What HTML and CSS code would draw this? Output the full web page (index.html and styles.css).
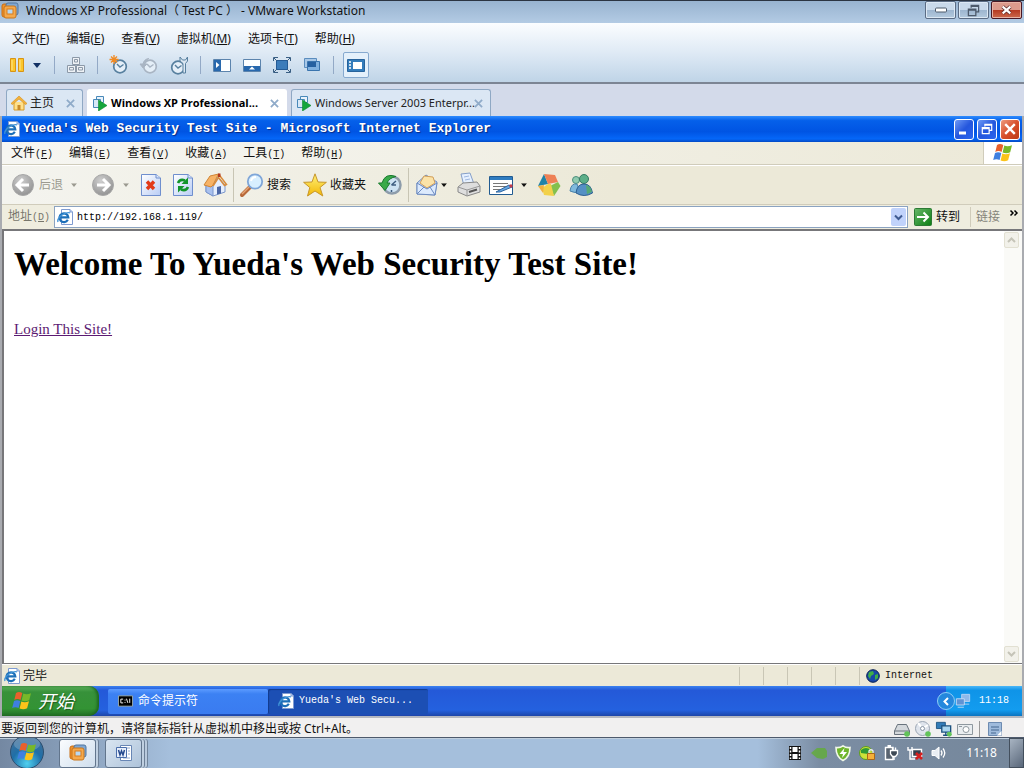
FILE: index.html
```html
<!DOCTYPE html>
<html lang="zh-CN">
<head>
<meta charset="utf-8">
<title>Windows XP Professional - VMware Workstation</title>
<link rel="stylesheet" href="styles.css">
</head>
<body>
<svg class="defs" width="0" height="0" aria-hidden="true">
  <defs>
    <linearGradient id="page-g" x1="0" y1="0" x2="1" y2="1"><stop offset="0" stop-color="#fff"/><stop offset="1" stop-color="#b9cdf5"/></linearGradient>
    <radialGradient id="gray-g" cx=".4" cy=".3" r=".8"><stop offset="0" stop-color="#cfcfcf"/><stop offset="1" stop-color="#8c8c8c"/></radialGradient>
    <linearGradient id="gold-g" x1="0" y1="0" x2="0" y2="1"><stop offset="0" stop-color="#fff27a"/><stop offset="1" stop-color="#f2b705"/></linearGradient>
    <radialGradient id="orb-g" cx=".5" cy=".85" r=".9"><stop offset="0" stop-color="#4fd0ef"/><stop offset=".5" stop-color="#1f6fa8"/><stop offset="1" stop-color="#4a6f94"/></radialGradient>
    <linearGradient id="green-g" x1="0" y1="0" x2="1" y2="1"><stop offset="0" stop-color="#69b86a"/><stop offset="1" stop-color="#0b7d12"/></linearGradient>
    <symbol id="flag" viewBox="0 0 22 20">
      <path d="M5 2C7 .6 9 .7 11.300 2L9.600 9C7.500 7.800 5.500 7.800 3.300 9Z" fill="#e8602c"/>
      <path d="M12.300 2.500C14.500 3.600 17 3.600 20 2.200L18.200 9.300C15.500 10.600 13 10.500 10.600 9.500Z" fill="#78b829"/>
      <path d="M3 10C5 8.900 7.300 9 9.300 10L7.600 17C5.500 15.900 3.400 15.900 1.200 17Z" fill="#3f7fe0"/>
      <path d="M10.300 10.500C12.500 11.600 15 11.600 18 10.300L16.100 17.300C13.500 18.600 11 18.500 8.600 17.500Z" fill="#fbc31a"/>
    </symbol>
    <symbol id="ie" viewBox="0 0 16 16">
      <path d="M4.500.5H13L15.500 3V15.500H4.500Z" fill="#fff" stroke="#7f9bd0"/>
      <path d="M13 .5V3H15.500" fill="#c8d8f5" stroke="#7f9bd0"/>
      <path d="M10.800 10.800A4.400 4.400 0 1 1 11.300 8.400H3.500" fill="none" stroke="#1d6fb8" stroke-width="2.200"/>
      <path d="M1 13C-.4 9.200 7 2.600 13 3.800" fill="none" stroke="#3f92d6" stroke-width="1.300"/>
    </symbol>
    <symbol id="vm-logo" viewBox="0 0 18 18">
      <rect x="1" y="2" width="13" height="13" rx="2" fill="#f0912a" stroke="#c96f13"/>
      <rect x="5" y="1" width="12" height="12" rx="2" fill="#7fa7d2" stroke="#52779f"/>
      <rect x="3" y="4" width="12" height="12" rx="2" fill="#f5a94c" stroke="#c8761c"/>
      <rect x="6" y="7" width="6" height="5" fill="#b9d8f0" stroke="#d97c1b"/>
    </symbol>
    <symbol id="vm-run" viewBox="0 0 16 16">
      <path d="M4.500 1.500H11.500V7.500H4.500Z" fill="#e9f2fb" stroke="#4889b9"/>
      <path d="M1.500 4.500H8.500V12.500H1.500Z" fill="#d8e8f6" stroke="#4889b9"/>
      <path d="M6.500 5 15 10.500 6.500 16Z" fill="#15a63c" stroke="#0d8a2e" stroke-width=".6"/>
    </symbol>
    <symbol id="clock" viewBox="0 0 20 20">
      <circle cx="11" cy="11.500" r="6.300" fill="#e5eff8" stroke="currentColor" stroke-width="1.700"/>
      <path d="M8 9 11 12 14.500 9.500" fill="none" stroke="currentColor" stroke-width="1.400"/>
    </symbol>
    <symbol id="x" viewBox="0 0 10 10"><path d="M1 1 9 9M9 1 1 9" stroke="currentColor" stroke-width="2"/></symbol>
    <symbol id="restore" viewBox="0 0 14 14"><path d="M4.500 4V1.500H12.500V8.500H10M4.500 2.500H12.500M1.500 5.500H9.500V12.500H1.500ZM1.500 6.500H9.500" fill="none" stroke="currentColor" stroke-width="1.400"/></symbol>
    <symbol id="down" viewBox="0 0 8 5"><path d="M0 0H8L4 5Z" fill="currentColor"/></symbol>
    <symbol id="monitors" viewBox="0 0 18 18">
      <path d="M7.500 1.500H16.500V8.500H7.500ZM12 8.500V11M9 11.500H15" fill="#5ca6dd" stroke="#244e7b"/>
      <path d="M2.500 6.500H11.500V13.500H2.500ZM7 13.500V16M4 16.500H10" fill="#9bd0f0" stroke="#244e7b"/>
    </symbol>
  </defs>
</svg>

<header class="host-title">
  <svg class="i18"><use href="#vm-logo"/></svg>
  <span class="grow">Windows XP Professional（ Test PC ） - VMware Workstation</span>
  <div class="host-controls">
    <button class="hc" aria-label="最小化"><svg width="14" height="6"><rect x="1.500" y="1" width="11" height="4" rx="1" fill="#fff" stroke="#4d5a6b"/></svg></button>
    <button class="hc" aria-label="还原"><svg width="13" height="13" class="dark"><use href="#restore"/></svg></button>
    <button class="hc hc-close" aria-label="关闭"><svg width="11" height="10" viewBox="0 0 13 11"><path d="M2 1.500 11 9.500M11 1.500 2 9.500" stroke="#5b2a2a" stroke-width="4.400"/><path d="M2 1.500 11 9.500M11 1.500 2 9.500" stroke="#fff" stroke-width="2.600"/></svg></button>
  </div>
</header>

<div class="host-chrome">
  <nav class="host-menu">
    <button>文件(<u>F</u>)</button><button>编辑(<u>E</u>)</button><button>查看(<u>V</u>)</button><button>虚拟机(<u>M</u>)</button><button>选项卡(<u>T</u>)</button><button>帮助(<u>H</u>)</button>
  </nav>
  <div class="host-tools">
    <div class="tg none">
      <button class="ht" aria-label="挂起"><svg class="i18" viewBox="0 0 18 18"><path d="M2.500 2.500H7.500V15.500H2.500ZM10.500 2.500H15.500V15.500H10.500Z" fill="#fbc62b" stroke="#d99413"/><path d="M4 4V14M12 4V14" stroke="#ffe690"/></svg></button>
      <button class="ht-arrow" aria-label="电源选项"><svg width="8" height="5"><use href="#down"/></svg></button>
    </div>
    <div class="tg">
      <button class="ht" aria-label="发送组合键"><svg class="i20" viewBox="0 0 20 20"><g fill="#eef2f6" stroke="#8c99a8"><path d="M6.500 2.500H13.500V9.500H6.500ZM1.500 10.500H9.500V17.500H1.500ZM10.500 10.500H18.500V17.500H10.500Z"/><path d="M8.500 4.500H11.500V7H8.500ZM3.500 12.500H7.500V15H3.500ZM12.500 12.500H16.500V15H12.500Z"/></g></svg></button>
    </div>
    <div class="tg">
      <button class="ht" aria-label="拍摄快照"><svg class="i20 steel"><use href="#clock"/><path d="M5 0V9M.5 4.500H9.500M2 1.500 8 7.500M8 1.500 2 7.500" stroke="#f08a24" stroke-width="1.300"/></svg></button>
      <button class="ht" aria-label="恢复快照"><svg class="i20 pale"><use href="#clock"/><path d="M1 9 4 13 8 9ZM4 9Q5 4 10 3.500" fill="#a9b5c3" stroke="#a9b5c3"/></svg></button>
      <button class="ht" aria-label="管理快照"><svg class="i20 steel"><use href="#clock" x="-2" y="1" width="20" height="20"/><path d="M11 2V6L14 8.500V18H16.500V8.500L18.500 6V2L16.500 5H13.500Z" fill="#dce8f3" stroke="#58809f"/></svg></button>
    </div>
    <div class="tg">
      <button class="ht" aria-label="显示库"><svg class="i20" viewBox="0 0 20 20"><path d="M1.500 4.500H18.500V16.500H1.500Z" fill="#fff" stroke="#5c84ad"/><path d="M2 5H9V16H2Z" fill="#2868ad"/><path d="M4 7V13L7.500 10Z" fill="#fff"/></svg></button>
      <button class="ht" aria-label="缩略图栏"><svg class="i20" viewBox="0 0 20 20"><path d="M1.500 4.500H18.500V16.500H1.500Z" fill="#fff" stroke="#5c84ad"/><path d="M2 11H18V16H2Z" fill="#2868ad"/><path d="M7 14.500H13L10 11.500Z" fill="#fff"/></svg></button>
      <button class="ht" aria-label="全屏"><svg class="i20" viewBox="0 0 20 20"><path d="M4.500 5.500H15.500V14.500H4.500Z" fill="#3c7cba" stroke="#245b96"/><path d="M1.500 6V2.500H6M14 2.500H18.500V6M18.500 14V17.500H14M6 17.500H1.500V14M2 3 5 6M18 3 15 6M2 17 5 14M18 17 15 14" fill="none" stroke="#395e83"/></svg></button>
      <button class="ht" aria-label="Unity"><svg class="i20" viewBox="0 0 20 20"><path d="M2.500 3.500H14.500V12.500H2.500Z" fill="#a8c8e8" stroke="#5b8dbe"/><path d="M5.500 6.500H17.500V15.500H5.500Z" fill="#7fb0df" stroke="#3a74ae"/><path d="M6 7H14V12H6Z" fill="#2560a1"/></svg></button>
    </div>
    <div class="tg">
      <button class="ht ht-on" aria-label="控制台视图" aria-pressed="true"><svg class="i20" viewBox="0 0 20 20"><path d="M1.500 4.500H18.500V16.500H1.500Z" fill="#337cbb" stroke="#27639c"/><path d="M7 7H16V14H7Z" fill="#fff"/><path d="M3 7H5M3 10H5M3 13H5" stroke="#fff" stroke-width="1.500"/></svg></button>
    </div>
  </div>
</div>

<div class="tabs" role="tablist">
  <div class="tab tab-home"><svg width="16" height="16" viewBox="0 0 16 16"><path d="M3 7V15H13V7" fill="#ffe08a" stroke="#d79a27"/><path d="M0 8.500 8 1 16 8.500 14.500 9.500 8 4 1.500 9.500Z" fill="#f4b23c" stroke="#d18e1c" stroke-width=".6"/><path d="M6.500 10H9.500V15H6.500Z" fill="#c98a2a"/></svg><button role="tab" class="tab-label">主页</button><button class="tab-x" aria-label="关闭"><svg width="9" height="9"><use href="#x"/></svg></button></div>
  <div class="tab tab-vm tab-on"><svg width="16" height="16"><use href="#vm-run"/></svg><button role="tab" aria-selected="true" class="tab-label">Windows XP Professional...</button><button class="tab-x" aria-label="关闭"><svg width="9" height="9"><use href="#x"/></svg></button></div>
  <div class="tab tab-vm"><svg width="16" height="16"><use href="#vm-run"/></svg><button role="tab" class="tab-label">Windows Server 2003 Enterpr...</button><button class="tab-x" aria-label="关闭"><svg width="9" height="9"><use href="#x"/></svg></button></div>
</div>

<main class="guest">
  <div class="xp-title">
    <svg class="i16"><use href="#ie"/></svg>
    <span class="grow">Yueda's Web Security Test Site - Microsoft Internet Explorer</span>
    <button class="xc" aria-label="最小化"><svg width="14" height="14"><path d="M2 11H9" stroke="#fff" stroke-width="3"/></svg></button>
    <button class="xc" aria-label="还原"><svg width="12" height="12"><use href="#restore"/></svg></button>
    <button class="xc xc-close" aria-label="关闭"><svg width="12" height="12"><use href="#x"/></svg></button>
  </div>

  <div class="ie-menu-row">
    <nav class="ie-menu">
      <button>文件<span>(<u>F</u>)</span></button><button>编辑<span>(<u>E</u>)</span></button><button>查看<span>(<u>V</u>)</span></button><button>收藏<span>(<u>A</u>)</span></button><button>工具<span>(<u>T</u>)</span></button><button>帮助<span>(<u>H</u>)</span></button>
    </nav>
    <div class="throbber"><svg width="22" height="20"><use href="#flag"/></svg></div>
  </div>

  <div class="ie-tools">
    <div class="ie-back">
      <button class="it it-label" disabled><svg class="i24" viewBox="0 0 24 24"><circle cx="12" cy="12" r="10.500" fill="url(#gray-g)" stroke="#a8a8a8"/><path d="M12 6 6 12 12 18M7 12H18" fill="none" stroke="#fff" stroke-width="3"/></svg><span>后退</span></button>
      <button class="arrow" disabled aria-label="后退列表"><svg width="6" height="4" viewBox="0 0 8 5"><use href="#down"/></svg></button>
    </div>
    <button class="it" disabled aria-label="前进"><svg class="i24" viewBox="0 0 24 24"><circle cx="12" cy="12" r="10.500" fill="url(#gray-g)" stroke="#a8a8a8"/><path d="M12 6 18 12 12 18M17 12H6" fill="none" stroke="#fff" stroke-width="3"/></svg></button>
    <button class="arrow" disabled aria-label="前进列表"><svg width="6" height="4" viewBox="0 0 8 5"><use href="#down"/></svg></button>
    <button class="it" aria-label="停止"><svg class="i24" viewBox="0 0 24 24"><path d="M2.500 1.500H17L21.500 5V22.500H2.500Z" fill="url(#page-g)" stroke="#6f8fce"/><path d="M17 1.500V5H21.500" fill="#dce7fb" stroke="#6f8fce"/><path d="M8 8.500 15 16M15 8.500 8 16" stroke="#e23a18" stroke-width="3.400"/></svg></button>
    <button class="it" aria-label="刷新"><svg class="i24" viewBox="0 0 24 24"><path d="M2.500 1.500H17L21.500 5V22.500H2.500Z" fill="url(#page-g)" stroke="#6f8fce"/><path d="M17 1.500V5H21.500" fill="#dce7fb" stroke="#6f8fce"/><path d="M7 10Q9 5.500 14 7.500" fill="none" stroke="#12952a" stroke-width="2.600"/><path d="M17 4.500V11H10.500Z" fill="#12952a"/><path d="M17 14Q15 18.500 10 16.500" fill="none" stroke="#12952a" stroke-width="2.600"/><path d="M7 19.500V13H13.500Z" fill="#12952a"/></svg></button>
    <button class="it" aria-label="主页"><svg class="i24" viewBox="0 0 24 24"><path d="M3 12 9 13 15 4 22 12V19L10 23 3 19Z" fill="#e6effd" stroke="#7b96cc"/><path d="M3 12V19L10 23V12Z" fill="#a9c1ee" stroke="#7b96cc"/><path d="M1 12 7 3 15.500 1 10 12 8 14Z" fill="#f7b365" stroke="#d08435"/><path d="M15.500 1 23.500 11.500 21.500 12.500 15.500 4.500 10 13" fill="none" stroke="#d98c3b" stroke-width="1.500"/><path d="M15 .5H17.500V4H15Z" fill="#b33a1e"/><path d="M14 14 18 13V20.500L14 21.500Z" fill="#4c67a5"/></svg></button>
    <span class="vsep"></span>
    <button class="it it-label it-wide"><svg class="i24" viewBox="0 0 24 24"><path d="M2 22 10 14" stroke="#b8693a" stroke-width="4" stroke-linecap="round"/><path d="M2 21 9 14" stroke="#e5a677" stroke-width="1.500"/><circle cx="15" cy="8.500" r="7.200" fill="#d8efff" stroke="#7fa6d8" stroke-width="1.800"/><path d="M11 8Q12 4 16 4" fill="none" stroke="#fff" stroke-width="2"/></svg><span>搜索</span></button>
    <button class="it it-label it-wide"><svg class="i24" viewBox="0 0 24 24"><path d="M12 .8 15 9 23.400 9.300 17 14.500 19.800 23 12 18 4.500 23 6.800 14.500.6 9.300 9 9Z" fill="url(#gold-g)" stroke="#c7962a"/></svg><span>收藏夹</span></button>
    <button class="it" aria-label="历史"><svg class="i24" viewBox="0 0 24 24"><circle cx="14" cy="12" r="8.500" fill="#cde2f3" stroke="#8d9cab" stroke-width="2.500"/><path d="M13.500 12 18 8M13.500 12H18M13.500 17V19" stroke="#3c5c80" stroke-width="1.500"/><path d="M18 3.500Q7-.5 4 10H.5L7 17.500 12 10H9Q11 5 18 3.500Z" fill="#39aa49" stroke="#1b7c30"/></svg></button>
    <span class="vsep"></span>
    <div class="mail">
      <button class="it" aria-label="邮件"><svg class="i24" viewBox="0 0 24 24"><path d="M2 10 11 2 22 9 20 22 2 21Z" fill="#c4d9f8" stroke="#6d8bc0"/><path d="M5 10 9 3 18 4 20 10 12 15Z" fill="#fbe3a8" stroke="#d2a05a"/><path d="M2 10 12 16 22 10 20 22 2 21Z" fill="#dceafd" stroke="#6d8bc0"/><path d="M2 21 9 14M20 22 15 14" stroke="#6d8bc0"/></svg></button>
      <button class="arrow" aria-label="邮件列表"><svg width="6" height="4" viewBox="0 0 8 5"><use href="#down"/></svg></button>
    </div>
    <button class="it" aria-label="打印"><svg class="i24" viewBox="0 0 24 24"><path d="M4 1 13 0 17 11 7 13Z" fill="#e5f0ff" stroke="#859fc8"/><path d="M7 4 12 3M8 7 13 6" stroke="#9fb7df"/><path d="M1 14 6 10 20 9 23 13V19L10 23 1 19Z" fill="#dedede" stroke="#888"/><path d="M1 14 10 17 23 13M10 17V23" fill="none" stroke="#999"/><path d="M12 19 20 16.500" stroke="#555" stroke-width="2"/></svg></button>
    <div class="edit">
      <button class="it" aria-label="编辑"><svg class="i24" viewBox="0 0 24 24"><path d="M.5 3.500H23.500V21.500H.5Z" fill="#fff" stroke="#215b91"/><path d="M1 4H23V7H1Z" fill="#2f7cc0"/><path d="M4 10.500H19M4 13.500H18M4 16.500H12" stroke="#777"/><path d="M7 19 20 12 23 14 11 19Z" fill="#68a7e4" stroke="#2c659f"/><circle cx="22" cy="13" r="1.700" fill="#c33c4d"/></svg></button>
      <button class="arrow" aria-label="编辑列表"><svg width="6" height="4" viewBox="0 0 8 5"><use href="#down"/></svg></button>
    </div>
    <button class="it" aria-label="网络工具"><svg class="i24" viewBox="0 0 24 24"><path d="M7 1 11 11 1 13Z" fill="#1e83a8"/><path d="M7 1 18 2 21 9 11 11Z" fill="#ee8156"/><path d="M21 9 23.500 13 17 23 13 13Z" fill="#83c04e"/><path d="M11 11H14L17 23 7 22 5 15Z" fill="#f2d14a"/><path d="M1 13 7 12 6 20Z" fill="#f0b040"/></svg></button>
    <button class="it" aria-label="Messenger"><svg class="i24" viewBox="0 0 24 24"><circle cx="7" cy="7" r="3.500" fill="#8fcbb0" stroke="#4e8f7c"/><path d="M1 18Q2 10 8 11L11 18Q6 21 1 18Z" fill="#7fb9dd" stroke="#4b82aa"/><circle cx="15" cy="6" r="4.500" fill="#5caf88" stroke="#357963"/><path d="M7 20Q8 11 15 11 22 11 23.500 20 15 25 7 20Z" fill="#5590c4" stroke="#2d5f91"/><path d="M17 12Q22 13 23 19L18 21Z" fill="#55a875"/></svg></button>
  </div>

  <form class="address">
    <label for="url">地址<span class="mono">(<u>D</u>)</span></label>
    <div class="url-box">
      <svg class="i16"><use href="#ie"/></svg>
      <input id="url" type="text" value="http://192.168.1.119/">
      <button type="button" class="url-drop" aria-label="历史地址"><svg width="9" height="7"><path d="M1 1.500 4.500 5 8 1.500" fill="none" stroke="#3f5b91" stroke-width="2"/></svg></button>
    </div>
    <button type="button" class="go"><svg width="18" height="18" viewBox="0 0 18 18"><rect x=".5" y=".5" width="17" height="17" rx="1" fill="url(#green-g)" stroke="#2c7a34"/><path d="M3 9H14M9.500 4.500 14 9 9.500 13.500" fill="none" stroke="#fff" stroke-width="2"/></svg>转到</button>
    <span class="links">链接</span>
    <button type="button" class="more" aria-label="更多"><svg width="8" height="6"><path d="M.5.5 3 3 .5 5.500M4.500.5 7 3 4.500 5.500" fill="none" stroke="#000" stroke-width="1.500"/></svg></button>
  </form>

  <div class="view">
    <article class="page">
      <h1>Welcome To Yueda's Web Security Test Site!</h1>
      <a href="#login">Login This Site!</a>
    </article>
    <div class="scroll">
      <button disabled aria-label="向上滚动"><svg width="9" height="6"><path d="M1 5 4.500 1.500 8 5" fill="none" stroke="#c5c4b8" stroke-width="2"/></svg></button>
      <button disabled aria-label="向下滚动"><svg width="9" height="6"><path d="M1 1 4.500 4.500 8 1" fill="none" stroke="#c5c4b8" stroke-width="2"/></svg></button>
    </div>
  </div>

  <footer class="ie-status">
    <svg class="i16"><use href="#ie"/></svg><span class="grow">完毕</span>
    <i></i><i></i><i></i><i></i><i></i>
    <div class="zone"><svg width="14" height="14" viewBox="0 0 14 14"><circle cx="7" cy="7" r="6.300" fill="#1647a8" stroke="#071f50"/><path d="M3 3 7 2 8 5 5 7 4 10 2 7ZM9 6 12 5V9L9 11Z" fill="#3fae48"/></svg><span class="mono">Internet</span></div>
  </footer>

  <div class="xp-bar">
    <button class="xp-start"><svg width="22" height="20"><use href="#flag"/></svg><span>开始</span></button>
    <button class="xp-task"><svg width="15" height="12" viewBox="0 0 16 12"><path d="M.5.500H15.500V11.500H.5Z" fill="#000" stroke="#9aa"/><path d="M5.500 4H3V8H5.500M7.500 4.500V5.500M7.500 7V8M9 3.500 10.500 8M12.500 3.500V8" fill="none" stroke="#fff"/></svg><span>命令提示符</span></button>
    <button class="xp-task xp-task-on"><svg class="i16"><use href="#ie"/></svg><span class="mono">Yueda's Web Secu...</span></button>
    <div class="xp-tray">
      <button class="chev" aria-label="显示隐藏图标"><svg width="6" height="9"><path d="M5 1 1.500 4.500 5 8" fill="none" stroke="#fff" stroke-width="2"/></svg></button>
      <svg class="i16" viewBox="0 0 18 18"><path d="M7.500 1.500H16.500V9.500H7.500ZM9 12.500H16" fill="#8fb9ea" stroke="#b9d6f5"/><path d="M1.500 6.500H10.500V13.500H1.500ZM3 16H10" fill="#5f93d4" stroke="#c8def6"/></svg>
      <time class="mono">11:18</time>
    </div>
  </div>
</main>

<footer class="vm-status">
  <span class="grow">要返回到您的计算机，请将鼠标指针从虚拟机中移出或按 Ctrl+Alt。</span>
  <div class="devices">
    <svg class="i16" viewBox="0 0 16 16"><path d="M3.500 3.500H12.500L15.500 10V13.500H.5V10Z" fill="#d4d8dc" stroke="#69737d"/><path d="M.5 10H15.500" stroke="#69737d"/><circle cx="13" cy="13" r="2.800" fill="#62c35a"/></svg>
    <svg class="i16" viewBox="0 0 16 16"><circle cx="7.500" cy="7.500" r="7" fill="#dfe4ec" stroke="#9aa5b3"/><path d="M7.500 7.500 3 2M7.500 7.500 13 4" stroke="#fff" stroke-width="2"/><circle cx="7.500" cy="7.500" r="2" fill="#fff" stroke="#8794a3"/><circle cx="13" cy="13" r="2.800" fill="#62c35a"/></svg>
    <svg class="i16" viewBox="0 0 18 18"><path d="M.5 1.500H10.500V8.500H.5Z" fill="#327bb7" stroke="#1c527f"/><path d="M6.500 5.500H16.500V12.500H6.500ZM11 13V16M8 16H14" fill="#a9d5ef" stroke="#1c527f" stroke-width="1.500"/><circle cx="15" cy="15" r="2.800" fill="#62c35a"/></svg>
    <svg class="i16" viewBox="0 0 16 16"><path d="M.5 3.500H15.500V13.500H.5Z" fill="#e9edf0" stroke="#8e989f"/><circle cx="9" cy="8.500" r="3" fill="#fff" stroke="#8e989f"/><path d="M2 5.500H5" stroke="#8e989f"/></svg>
    <span class="dsep"></span>
    <svg class="i16" viewBox="0 0 16 16"><path d="M1.500 1.500H14.500V14.500H1.500Z" fill="#9fbbdc" stroke="#6d8bb1"/><path d="M4 6H12M4 9H12M4 12H9" stroke="#44668f"/><path d="M10 14.500 14.500 10V14.500Z" fill="#fff"/></svg>
  </div>
</footer>

<footer class="host-bar">
  <button class="orb" aria-label="开始"><svg width="36" height="30" viewBox="0 0 36 30"><circle cx="18" cy="14" r="16.500" fill="url(#orb-g)" stroke="#2d4e6e"/><ellipse cx="18" cy="6" rx="13" ry="7" fill="#fff" opacity=".2"/><use href="#flag" x="7" y="4" width="22" height="20"/></svg></button>
  <button class="host-task" aria-label="VMware Workstation"><svg class="i18"><use href="#vm-logo"/></svg></button>
  <button class="host-task host-task-2" aria-label="Word"><svg class="i18" viewBox="0 0 18 18"><path d="M5.500 1.500H16.500V16.500H5.500Z" fill="#fff" stroke="#6886b5"/><path d="M12 4H15M13 7H15M13 10H15M8 14H15" stroke="#90a9d0"/><path d="M1.500 3.500H11.500V13.500H1.500Z" fill="#e9f0fc" stroke="#4a6eab"/><path d="M3.500 6 5 11 6.500 7 8 11 9.500 6" fill="none" stroke="#24498e" stroke-width="1.500"/></svg></button>
  <div class="host-tray">
    <svg class="i16" viewBox="0 0 16 16"><path d="M2 1H14V15H2Z" fill="#111"/><path d="M5.500 2H10.500V7H5.500ZM5.500 9H10.500V14H5.500Z" fill="#fff"/><path d="M3.500 2V14M12.500 2V14" stroke="#fff" stroke-width="1.500" stroke-dasharray="2 1.500"/></svg>
    <svg class="i16" viewBox="0 0 16 16"><path d="M0 8 6 3H14L16 6V12L12 14 6 13Z" fill="#63ac3d" opacity=".85"/></svg>
    <svg class="i16" viewBox="0 0 16 16"><path d="M8 .8Q11 3 15 2.500 15 12 8 15.500 1 12 1 2.500 5 3 8 .8Z" fill="#6fb52c" stroke="#f1f8e8" stroke-width="1.600"/><path d="M9.500 3 4.500 9H8L7 13 12 7H8.500Z" fill="#fff"/></svg>
    <svg class="i16" viewBox="0 0 16 16"><circle cx="7" cy="8" r="6.500" fill="#cde23a" stroke="#5c9e22"/><path d="M2 5Q7 1 12 5L9 9 2 8Z" fill="#2f9a36"/><path d="M8.500 8.500H15.500V14.500H8.500Z" fill="#f6b13a" stroke="#a9681b"/><path d="M10 8V6Q12 3.500 14 6V8" fill="none" stroke="#eee" stroke-width="1.300"/></svg>
    <svg class="i16" viewBox="0 0 16 16"><path d="M2.500 2.500H10V14.500H2.500Z" fill="#5a6470" stroke="#fff" stroke-width="1.400"/><path d="M4.500 1H8" stroke="#fff" stroke-width="2"/><path d="M7.500 5.500H14.500V9L12.500 11.500H9.500L7.500 9Z" fill="#3d4854" stroke="#fff" stroke-width="1.300"/><path d="M9.500 2.500V5M12.500 2.500V5M11 12V15" stroke="#fff" stroke-width="1.400"/></svg>
    <svg class="i16" viewBox="0 0 16 16"><path d="M5.500 4.500H14.500V11.500H5.500Z" fill="#33404d" stroke="#fff" stroke-width="1.400"/><path d="M1 2V5H5V2M3 5V14H8" fill="none" stroke="#fff" stroke-width="1.400"/><path d="M9 8 15 14M15 8 9 14" stroke="#d41f1f" stroke-width="2.600"/></svg>
    <svg class="i16" viewBox="0 0 16 16"><path d="M1 5.500H4L8 2V14L4 10.500H1Z" fill="#e9eef3" stroke="#fff"/><path d="M10 5.500Q12 8 10 10.500M12 3.500Q15.500 8 12 12.500" fill="none" stroke="#fff" stroke-width="1.300"/></svg>
    <time>11:18</time>
  </div>
  <button class="desktop" aria-label="显示桌面"></button>
</footer>
</body>
</html>
```
FILE: styles.css
```css
* { box-sizing: border-box; }

body {
  margin: 0;
  min-height: 100vh;
  display: flex;
  flex-direction: column;
  background: #d3daea;
  color: #111;
  font: 12px/16px "Noto Sans", "Noto Sans CJK SC", sans-serif;
}

button {
  padding: 0;
  border: 0;
  background: none;
  color: inherit;
  font: inherit;
  white-space: nowrap;
}

svg { display: block; flex: none; overflow: visible; }
.defs { position: absolute; }
.i16 { width: 16px; height: 16px; }
.i18 { width: 18px; height: 18px; }
.i20 { width: 20px; height: 20px; }
.i24 { width: 24px; height: 24px; }
.grow { flex: 1; white-space: nowrap; }
.mono { font-family: "Liberation Mono", "Noto Sans CJK SC", monospace; font-size: 10px; }
.steel { color: #58809f; }
.pale { color: #a9b5c3; }
.dark { color: #4d5a6b; }

/* Host window title */
.host-title {
  display: flex;
  align-items: center;
  gap: 7px;
  height: 23px;
  padding: 0 2px 2px 1px;
  border-top: 1px solid #2b3442;
  background: linear-gradient(#98b3d0, #b3cbe4);
}
.host-controls { display: flex; gap: 2px; align-self: flex-start; }
.hc {
  display: grid;
  place-items: center;
  width: 31px;
  height: 18px;
  border: 1px solid #5b6c84;
  border-radius: 2px;
  background: linear-gradient(#c9d9ea 50%, #9db5cf 50%, #b4cade);
  box-shadow: inset 0 0 0 1px #dde8f4;
}
.hc-close {
  border-color: #491824;
  background: linear-gradient(#dc9a8c 50%, #b53820 50%, #cc6a4d);
  box-shadow: inset 0 0 0 1px #e7b3a6;
}

/* Host menu and toolbar */
.host-chrome {
  display: flex;
  flex-direction: column;
  height: 61px;
  border-bottom: 2px solid #7c8594;
  background: linear-gradient(#fbfdff, #dfeaf5 50%, #bfd4e7);
}
.host-menu { display: flex; gap: 17px; padding: 8px 12px 4px; }
.host-tools { display: flex; align-items: center; height: 28px; padding-left: 5px; }
.tg { display: flex; align-items: center; gap: 6px; }
.none { gap: 0; }
.tg + .tg::before { content: ""; width: 1px; height: 18px; margin: 0 3px 0 9px; background: #93a9c6; }
.ht, .ht-arrow { display: grid; place-items: center; width: 24px; height: 26px; }
.ht-arrow { width: 16px; color: #123064; }
.ht-on { width: 26px; border: 1px solid #86a9cf; border-radius: 2px; background: #e4f0fb; }

/* Virtual machine tabs */
.tabs { display: flex; gap: 4px; padding: 5px 6px 0; }
.tab {
  display: flex;
  align-items: center;
  gap: 3px;
  width: 200px;
  height: 27px;
  padding: 0 7px 0 4px;
  border: 1px solid #8fa8c4;
  border-bottom: 0;
  border-radius: 3px 3px 0 0;
  background: #dbe7f4;
  color: #222;
}
.tab-home { width: 77px; }
.tab-label { flex: 1; min-width: 0; text-align: left; font-size: 11px; }
.tab-home .tab-label { font-size: 12px; }
.tab-on { background: #fff; border-color: #fff; }
.tab-on .tab-label { font-family: "Open Sans", "Noto Sans", sans-serif; font-weight: 700; color: #000; }
.tab-x { color: #8fabc9; }

/* Guest display */
.guest {
  flex: 1;
  display: flex;
  flex-direction: column;
  padding: 0 2px;
  background: #a9abb0;
}
.xp-title {
  display: flex;
  align-items: center;
  gap: 3px;
  height: 26px;
  padding: 0 2px;
  background: linear-gradient(#2f8cff, #0560ea 18%, #0054e3 60%, #0567f8 88%, #0349c4);
  color: #fff;
  font: bold 13px/16px "Liberation Mono", monospace;
  text-shadow: 1px 1px 1px #0a2a80;
}
.xc {
  display: grid;
  place-items: center;
  width: 20px;
  height: 21px;
  border: 1px solid #fff;
  border-radius: 3px;
  background: linear-gradient(135deg, #6e9af5, #2456dd 50%, #2b66ee);
}
.xc-close { background: linear-gradient(135deg, #ee9c80, #d8502c 50%, #bd3a14); }

.ie-menu-row {
  display: flex;
  height: 23px;
  border-bottom: 1px solid #d0ccbb;
  background: linear-gradient(90deg, #f6f6f2, #ece9d8);
}
.ie-menu { flex: 1; display: flex; gap: 16px; padding: 1px 0 0 9px; }
.ie-menu span { font-family: "Liberation Mono", monospace; font-size: 10px; }
.throbber { display: grid; place-items: center; width: 39px; background: #fff; border-left: 1px solid #d0ccbb; }

.ie-tools {
  display: flex;
  align-items: center;
  gap: 8px;
  height: 40px;
  padding-left: 9px;
  border-top: 1px solid #fff;
  border-bottom: 1px solid #d0ccbb;
  background: linear-gradient(90deg, #f4f4ef, #ece9d8 60%);
}
.ie-back, .mail, .edit { display: flex; align-items: center; gap: 8px; }
.ie-back { margin-right: 4px; }
.mail { gap: 2px; }
.it:disabled, .arrow:disabled { color: #9b9a90; }
.it-label { display: flex; align-items: center; gap: 4px; }
.it-wide { gap: 3px; margin-right: 4px; }
.arrow { width: 8px; }
.vsep { width: 1px; height: 34px; margin: 0 -2px; background: #c8c5b4; }

.address {
  display: flex;
  align-items: center;
  height: 24px;
  padding-left: 6px;
  background: #efeddf;
}
.address label { width: 46px; color: #77766c; }
.url-box {
  flex: 1;
  display: flex;
  align-items: center;
  gap: 4px;
  height: 22px;
  padding: 1px 1px 1px 2px;
  border: 1px solid #8ba3c1;
  background: #fff;
}
.url-box input {
  flex: 1;
  min-width: 0;
  padding: 2px 0 0;
  border: 0;
  outline: 0;
  background: none;
  color: #000;
  font: 10px/16px "Liberation Mono", monospace;
}
.url-drop { display: grid; place-items: center; width: 15px; height: 18px; border-radius: 2px; background: #c1d3fb; }
.go { display: flex; align-items: center; gap: 4px; padding: 0 10px 0 6px; }
.links { padding: 2px 10px 2px 5px; border-left: 1px solid #d0ccbb; color: #85847a; }
.more { align-self: flex-start; width: 12px; padding-top: 5px; }

/* Web page */
.view {
  flex: 1;
  display: flex;
  border: solid #77777a;
  border-width: 2px 0 1px 2px;
  background: #fff;
}
.page { flex: 1; padding: 15px 10px; font: 15px/20px "Liberation Serif", serif; color: #000; }
.page h1 { margin: 0 0 36px; font-size: 33px; line-height: 37px; }
.page a { color: #5c1a72; }
.scroll {
  display: flex;
  flex-direction: column;
  justify-content: space-between;
  width: 18px;
  padding: 1px 0;
  background: #fafaf7;
}
.scroll button {
  display: grid;
  place-items: center;
  width: 15px;
  height: 16px;
  border: 1px solid #e2e0d2;
  border-radius: 2px;
  background: #f2f1ea;
}

.ie-status {
  display: flex;
  align-items: center;
  gap: 3px;
  height: 22px;
  padding-left: 2px;
  background: #ece9d8;
  border-top: 1px solid #fff;
}
.ie-status i { width: 21px; height: 18px; border-left: 1px solid #c9c6b5; }
.zone { display: flex; align-items: center; gap: 5px; width: 163px; height: 18px; padding-left: 6px; border-left: 1px solid #c9c6b5; }

/* Guest taskbar */
.xp-bar {
  display: flex;
  align-items: center;
  height: 30px;
  background: linear-gradient(#3b82f0, #2459d8 14%, #2461df 80%, #1c45a8);
  color: #fff;
}
.xp-start {
  display: flex;
  align-items: center;
  gap: 5px;
  width: 97px;
  height: 30px;
  margin-right: 9px;
  padding: 0 9px;
  border-radius: 0 10px 10px 0;
  background: linear-gradient(#5eb35d, #37913a 20%, #339334 75%, #216f24);
  box-shadow: inset -2px 0 3px #1d651f;
  font-size: 18px;
  line-height: 24px;
  font-style: italic;
  font-weight: 400;
  text-shadow: 1px 1px 1px #1d5a1e;
}
.xp-task {
  display: flex;
  align-items: center;
  gap: 5px;
  width: 160px;
  height: 25px;
  padding: 0 10px;
  border-radius: 2px;
  background: linear-gradient(#5c9bff, #3c81f3 20%, #3a7bf0);
}
.xp-task-on { background: #1c4fb4; box-shadow: inset 1px 1px 1px #123a8c; }
.xp-tray {
  display: flex;
  align-items: center;
  gap: 8px;
  height: 30px;
  margin-left: auto;
  padding-right: 13px;
  background: linear-gradient(#4cb8f8, #0f94e8 14%, #139cef 80%, #0c74c0);
}
.chev {
  display: grid;
  place-items: center;
  width: 18px;
  height: 18px;
  margin: 0 -8px 0 -9px;
  border: 1px solid #8fcdf6;
  border-radius: 50%;
  background: #2488dd;
}

/* Host status and taskbar */
.vm-status {
  display: flex;
  align-items: center;
  height: 22px;
  padding: 2px 21px 0 1px;
  border-top: 2px solid #b5b8c0;
  border-bottom: 1px solid #4e5a6c;
  background: #f1f0f0;
}
.devices { display: flex; align-items: center; gap: 5px; }
.dsep { width: 1px; height: 16px; margin: 0 2px 0 1px; background: #999; }

.host-bar {
  display: flex;
  align-items: center;
  height: 30px;
  padding-left: 9px;
  background: linear-gradient(90deg, #7488a2, #a5bfdc 170px, #a5bfdc 74%, #7b8da3 80%, #75879b);
  box-shadow: inset 0 1px 0 #c0cfde;
}
.orb { margin-right: 14px; overflow: hidden; }
.host-task {
  display: grid;
  place-items: center;
  width: 37px;
  height: 29px;
  margin-right: 9px;
  border: 1px solid #62758c;
  border-radius: 3px;
  background: linear-gradient(135deg, #fafcfe, #cfdeed);
  box-shadow: 2px 0 0 #c0d0e1, 3px 0 0 #6d8097;
}
.host-task-2 { background: linear-gradient(135deg, #d9e5f1, #aec3da); box-shadow: 2px 0 0 #c0d0e1, 3px 0 0 #6d8097, 5px 0 0 #b9cadd, 6px 0 0 #71859c; }
.host-tray { display: flex; align-items: center; gap: 8px; margin-left: auto; color: #fff; }
.host-tray time { margin: 0 12px 0 11px; }
.desktop { width: 15px; height: 30px; border: 1px solid #434f5d; background: linear-gradient(135deg, #a8b4c2, #59677a); }
```
